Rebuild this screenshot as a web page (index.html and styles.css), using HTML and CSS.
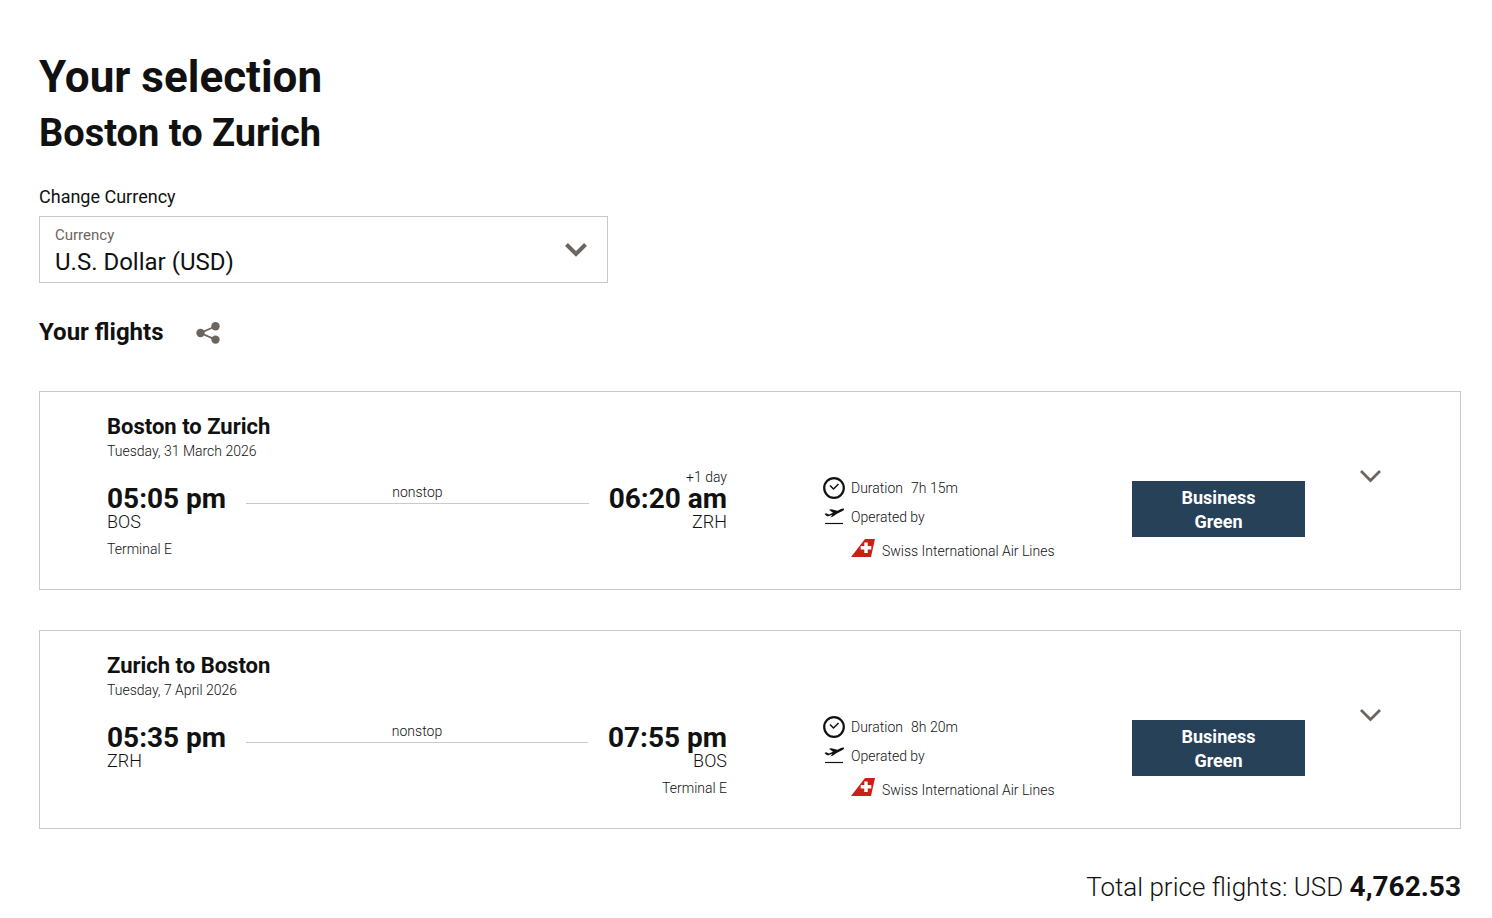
FILE: index.html
```html
<!DOCTYPE html>
<html lang="en">
<head>
    <meta charset="UTF-8">
    <meta name="viewport" content="width=device-width, initial-scale=1.0">
    <title>Your selection</title>
    <link rel="stylesheet" href="styles.css">
</head>
<body>

    <!-- Shared icons -->
    <svg class="icon-defs" aria-hidden="true">
        <symbol id="icon-clock" viewBox="0 0 22 22">
            <circle cx="11" cy="11" r="9.8" fill="none" stroke="currentColor" stroke-width="2.2"/>
            <path d="M7 8.5L10.5 12L15.5 7" fill="none" stroke="currentColor" stroke-width="1.5"/>
        </symbol>
        <symbol id="icon-plane" viewBox="0 0 22 20">
            <path d="M1.5 7L3 6.3L6 7.6L10 5.8L6 2.8L8.2 2.2L14.5 3.8L18 2C19.4 1.3 20.8 1.2 21 1.9C21.2 2.7 20.4 3.5 19 4.2L14 6.7L9.6 9.8L7.6 10.2L9.4 7.7L6 9C5 9.4 4.2 9.3 3.4 8.7Z" fill="currentColor"/>
            <path d="M2 16.5H20" stroke="currentColor" stroke-width="1.2"/>
        </symbol>
        <symbol id="icon-swiss" viewBox="0 0 24 18">
            <path d="M0 18L14 0H24L20 18Z" fill="#cc2017"/>
            <path d="M13.3 3.5H16.7V7H20.3V10.4H16.7V14H13.3V10.4H9.7V7H13.3Z" fill="#fff"/>
        </symbol>
        <symbol id="icon-chevron" viewBox="0 0 22 13">
            <path d="M1 1L10.5 10.5L20 1" fill="none" stroke="currentColor" stroke-width="2.8"/>
        </symbol>
    </svg>

    <main class="page">
        <h1>Your selection</h1>
        <h2 class="route">Boston to Zurich</h2>

        <p class="currency-title">Change Currency</p>
        <div class="currency">
            <label for="currency">Currency</label>
            <select id="currency" name="currency">
                <option value="USD" selected>U.S. Dollar (USD)</option>
                <option value="CHF">Swiss Franc (CHF)</option>
                <option value="EUR">Euro (EUR)</option>
            </select>
            <svg class="currency-arrow" viewBox="0 0 22 15" aria-hidden="true">
                <path d="M1.5 1.5L11 11L20.5 1.5" fill="none" stroke="currentColor" stroke-width="4"/>
            </svg>
        </div>

        <div class="flights-heading">
            <h3>Your flights</h3>
            <button class="share" type="button" aria-label="Share">
                <svg viewBox="0 0 24 22" aria-hidden="true">
                    <path d="M19.5 4.2L4.5 11L19.5 17.6" fill="none" stroke="currentColor" stroke-width="1.8"/>
                    <circle cx="4.5" cy="11" r="4.2" fill="currentColor"/>
                    <circle cx="19.5" cy="4.2" r="4.2" fill="currentColor"/>
                    <circle cx="19.5" cy="17.6" r="4.2" fill="currentColor"/>
                </svg>
            </button>
        </div>

        <section class="flight">
            <div class="journey">
                <h4>Boston to Zurich</h4>
                <p class="date">Tuesday, 31 March 2026</p>
                <div class="times">
                    <div class="stop">
                        <p class="day"></p>
                        <p class="time">05:05 pm</p>
                        <p class="airport">BOS</p>
                        <p class="terminal">Terminal E</p>
                    </div>
                    <div class="line">nonstop</div>
                    <div class="stop arrival">
                        <p class="day">+1 day</p>
                        <p class="time">06:20 am</p>
                        <p class="airport">ZRH</p>
                    </div>
                </div>
            </div>
            <div class="details">
                <p class="duration"><svg class="icon-time"><use href="#icon-clock"/></svg>Duration <span>7h 15m</span></p>
                <p class="operated"><svg class="icon-plane"><use href="#icon-plane"/></svg>Operated by</p>
                <p class="airline"><svg class="icon-swiss"><use href="#icon-swiss"/></svg>Swiss International Air Lines</p>
            </div>
            <div class="fare">Business<br>Green</div>
            <button class="toggle" type="button" aria-label="Show flight details"><svg><use href="#icon-chevron"/></svg></button>
        </section>

        <section class="flight">
            <div class="journey">
                <h4>Zurich to Boston</h4>
                <p class="date">Tuesday, 7 April 2026</p>
                <div class="times">
                    <div class="stop">
                        <p class="day"></p>
                        <p class="time">05:35 pm</p>
                        <p class="airport">ZRH</p>
                    </div>
                    <div class="line">nonstop</div>
                    <div class="stop arrival">
                        <p class="day"></p>
                        <p class="time">07:55 pm</p>
                        <p class="airport">BOS</p>
                        <p class="terminal">Terminal E</p>
                    </div>
                </div>
            </div>
            <div class="details">
                <p class="duration"><svg class="icon-time"><use href="#icon-clock"/></svg>Duration <span>8h 20m</span></p>
                <p class="operated"><svg class="icon-plane"><use href="#icon-plane"/></svg>Operated by</p>
                <p class="airline"><svg class="icon-swiss"><use href="#icon-swiss"/></svg>Swiss International Air Lines</p>
            </div>
            <div class="fare">Business<br>Green</div>
            <button class="toggle" type="button" aria-label="Show flight details"><svg><use href="#icon-chevron"/></svg></button>
        </section>

        <p class="total">Total price flights: USD <strong>4,762.53</strong></p>
    </main>

</body>
</html>
```

FILE: styles.css
```css
* {
    box-sizing: border-box;
}

body {
    margin: 0;
    font-family: Roboto, "Liberation Sans", Arial, sans-serif;
    font-size: 14px;
    font-weight: 300;
    line-height: 20px;
    color: #111;
    background-color: #fff;
}

h1, h2, h3, h4, p {
    margin: 0;
}

button {
    padding: 0;
    border: none;
    background: none;
    color: #6d645e;
    cursor: pointer;
}

svg {
    display: block;
    flex: none;
}

.icon-defs {
    position: absolute;
    width: 0;
    height: 0;
}

.page {
    padding: 49px 31px 0 39px;
}

h1 {
    font-size: 44px;
    line-height: 56px;
}

.route {
    font-size: 38px;
    line-height: 56px;
}

/* Currency drop-down */
.currency-title {
    margin-top: 24px;
    font-size: 18px;
    line-height: 24px;
    font-weight: 400;
}

.currency {
    position: relative;
    width: 40%;
    margin-top: 7px;
}

.currency label {
    position: absolute;
    top: 9px;
    left: 16px;
    font-size: 15px;
    font-weight: 400;
    color: #6d645e;
    pointer-events: none;
}

.currency select {
    display: block;
    width: 100%;
    height: 67px;
    padding: 26px 48px 2px 15px;
    border: 1px solid #c8c8c8;
    border-radius: 0;
    background: none;
    appearance: none;
    font-family: inherit;
    font-size: 24px;
    color: inherit;
}

.currency-arrow {
    position: absolute;
    top: 27px;
    right: 21px;
    width: 22px;
    height: 15px;
    color: #6d645e;
    pointer-events: none;
}

.flights-heading {
    display: flex;
    align-items: center;
    gap: 32px;
    margin-top: 33px;
}

.flights-heading h3 {
    font-size: 24px;
    line-height: 32px;
}

.share {
    padding-top: 2px;
}

.share svg {
    width: 24px;
    height: 22px;
}

/* Flight cards */
.flight {
    display: grid;
    grid-template-columns: 1fr 309px 228px 100px;
    align-items: start;
    min-height: 199px;
    padding: 22px 0 22px 67px;
    margin-top: 43px;
    border: 1px solid #c8c8c8;
}

.flight + .flight {
    margin-top: 40px;
}

.journey {
    padding-right: 96px;
}

.journey h4 {
    font-size: 22px;
    line-height: 26px;
}

.date {
    padding-top: 1px;
    margin-bottom: 6px;
}

.times {
    display: flex;
}

.arrival {
    text-align: right;
}

.day {
    height: 19px;
}

.time {
    font-size: 28px;
    line-height: 26px;
    font-weight: 700;
}

.airport {
    font-size: 18px;
}

.terminal {
    margin-top: 7px;
}

.line {
    flex: 1;
    height: 22px;
    margin: 15px 20px 0;
    border-bottom: 1px solid #c8c8c8;
    text-align: center;
}

.details {
    padding-top: 63px;
}

.details p {
    display: flex;
    align-items: center;
}

.duration span {
    margin-left: 8px;
}

.icon-time {
    width: 22px;
    height: 22px;
    margin-right: 6px;
}

.operated {
    margin: 8px 0 12px;
}

.icon-plane {
    width: 22px;
    height: 20px;
    margin-right: 6px;
}

.airline {
    padding-left: 28px;
}

.icon-swiss {
    width: 24px;
    height: 18px;
    margin: 0 7px 6px 0;
}

.fare {
    width: 173px;
    padding: 5px 4px 3px;
    margin-top: 67px;
    background-color: #264158;
    color: #fff;
    font-size: 18px;
    line-height: 24px;
    font-weight: 700;
    text-align: center;
}

.toggle {
    width: 22px;
    margin-top: 56px;
}

.toggle svg {
    width: 22px;
    height: 13px;
}

.total {
    margin-top: 42px;
    font-size: 26px;
    line-height: 32px;
    text-align: right;
}

.total strong {
    font-weight: 700;
    font-size: 28px;
}
```
